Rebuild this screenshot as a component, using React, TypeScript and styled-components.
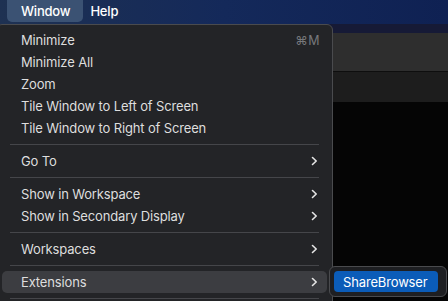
import styled, { createGlobalStyle } from "styled-components";

const GlobalStyle = createGlobalStyle`
  html, body {
    margin: 0;
    padding: 0;
    background: #050505;
  }
  body {
    font-family: Inter, "Noto Sans", "Liberation Sans", sans-serif;
    -webkit-font-smoothing: antialiased;
  }
`;

const Screen = styled.div`
  position: relative;
  width: 448px;
  height: 301px;
  overflow: hidden;
  display: flex;
  flex-direction: column;
  background: #050505;
`;

const MenuBar = styled.div`
  height: 24px;
  display: flex;
  align-items: flex-start;
  padding-left: 7px;
  background: linear-gradient(90deg, #1e3152 0%, #14295a 50%, #0f2153 100%);
`;

const BarItem = styled.div<{ $active?: boolean }>`
  height: 22px;
  display: flex;
  align-items: center;
  padding: 0 ${(p) => (p.$active ? "13px" : "7px")} 0 14px;
  padding-left: ${(p) => (p.$active ? "14px" : "7px")};
  border-radius: 0 0 5px 5px;
  background: ${(p) => (p.$active ? "#3b5273" : "transparent")};
  color: #ffffff;
  font-size: 13px;
  font-weight: 500;
  letter-spacing: -0.2px;
`;

const DesktopStrip = styled.div`
  height: 9px;
  background: #161a36;
`;

const TitleBar = styled.div`
  height: 38px;
  background: #2e2e2e;
  border-bottom: 1px solid #0e0e0e;
`;

const Toolbar = styled.div`
  height: 30px;
  background: #1d1d1d;
`;

const Content = styled.div`
  flex: 1;
  background: #050505;
`;

const Menu = styled.div`
  position: absolute;
  top: 24px;
  left: -4px;
  width: 337px;
  height: 300px;
  padding-top: 4px;
  box-sizing: border-box;
  background: #232427;
  border: 1px solid #4a4b4e;
  border-radius: 6px;
  display: flex;
  flex-direction: column;
`;

const Item = styled.div<{ $hover?: boolean }>`
  height: 22px;
  margin: 0 5px;
  padding: 0 9px 0 19px;
  border-radius: 5px;
  display: flex;
  align-items: center;
  justify-content: space-between;
  background: ${(p) => (p.$hover ? "#3c3d41" : "transparent")};
  color: #dedede;
  font-size: 13px;
  letter-spacing: -0.15px;
  flex-shrink: 0;
`;

const Shortcut = styled.span`
  color: #77787c;
  font-size: 12.5px;
  margin-right: -2px;
  letter-spacing: 0.5px;
`;

const Separator = styled.div`
  height: 11px;
  margin: 0 13px;
  display: flex;
  align-items: center;
  flex-shrink: 0;
  &::after {
    content: "";
    flex: 1;
    height: 1px;
    background: #45464a;
  }
`;

const SubMenu = styled.div`
  position: absolute;
  top: 266px;
  left: 329px;
  width: 118px;
  height: 31px;
  box-sizing: border-box;
  padding: 4px;
  background: #1e1f22;
  border: 1px solid #4a4b4e;
  border-radius: 6px;
`;

const SubItem = styled.div`
  height: 21px;
  width: 104px;
  border-radius: 4px;
  background: #0b5cb8;
  color: #ffffff;
  font-size: 13px;
  letter-spacing: -0.15px;
  display: flex;
  align-items: center;
  padding-left: 9px;
  box-sizing: border-box;
`;

const Chevron = () => (
  <svg width="7" height="10" viewBox="0 0 7 10">
    <polyline
      points="1.5,1.5 5.2,5 1.5,8.5"
      fill="none"
      stroke="#e6e6e6"
      strokeWidth="1.6"
      strokeLinecap="round"
      strokeLinejoin="round"
    />
  </svg>
);

type Entry = { label?: string; shortcut?: string; sub?: boolean; hover?: boolean; sep?: boolean };

const entries: Entry[] = [
  { label: "Minimize", shortcut: "⌘M" },
  { label: "Minimize All" },
  { label: "Zoom" },
  { label: "Tile Window to Left of Screen" },
  { label: "Tile Window to Right of Screen" },
  { sep: true },
  { label: "Go To", sub: true },
  { sep: true },
  { label: "Show in Workspace", sub: true },
  { label: "Show in Secondary Display", sub: true },
  { sep: true },
  { label: "Workspaces", sub: true },
  { sep: true },
  { label: "Extensions", sub: true, hover: true },
  { sep: true },
];

export default function App() {
  return (
    <Screen>
      <GlobalStyle />
      <MenuBar>
        <BarItem $active>Window</BarItem>
        <BarItem>Help</BarItem>
      </MenuBar>
      <DesktopStrip />
      <TitleBar />
      <Toolbar />
      <Content />
      <Menu>
        {entries.map((e, i) =>
          e.sep ? (
            <Separator key={i} />
          ) : (
            <Item key={i} $hover={e.hover}>
              <span>{e.label}</span>
              {e.shortcut && <Shortcut>{e.shortcut}</Shortcut>}
              {e.sub && <Chevron />}
            </Item>
          )
        )}
      </Menu>
      <SubMenu>
        <SubItem>ShareBrowser</SubItem>
      </SubMenu>
    </Screen>
  );
}
